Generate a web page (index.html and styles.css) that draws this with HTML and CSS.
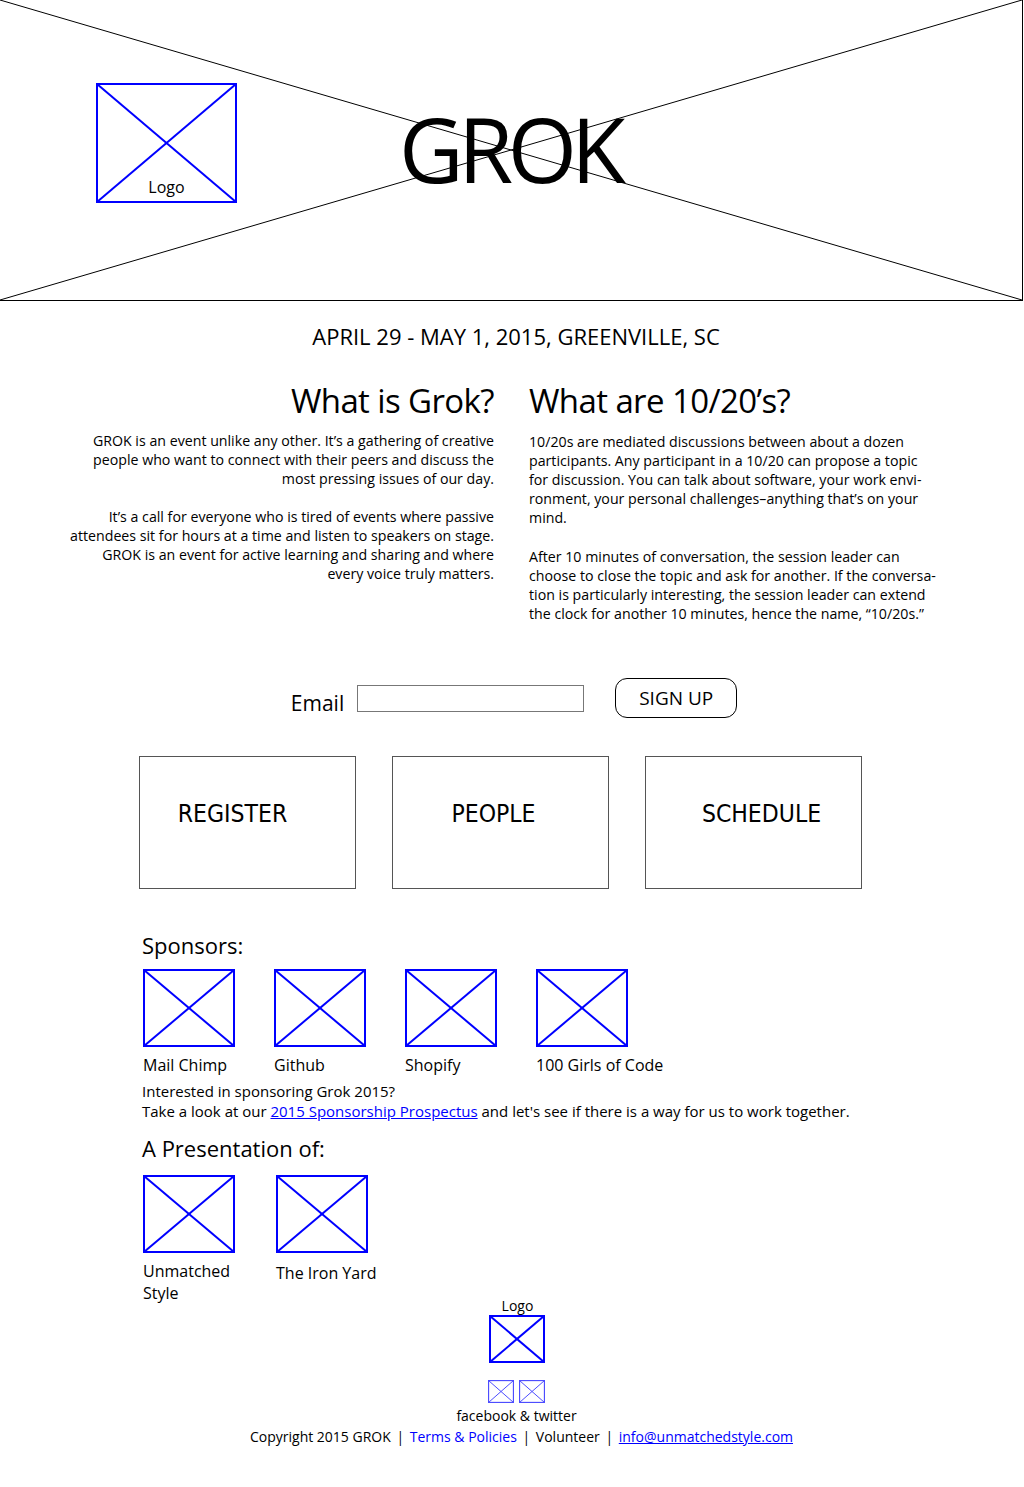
FILE: index.html
```html
<!DOCTYPE html>
<html lang="en">
<head>
<meta charset="utf-8">
<title>GROK</title>
<link rel="stylesheet" href="styles.css">
</head>
<body>
<header class="hero">
  <svg class="hero-x" width="1023" height="301" viewBox="0 0 1023 301">
    <line x1="0" y1="0" x2="1022" y2="300" stroke="#000" stroke-width="1"/>
    <line x1="0" y1="300" x2="1022" y2="0" stroke="#000" stroke-width="1"/>
  </svg>
  <div class="hero-logo">
    <svg width="141" height="120" viewBox="0 0 141 120">
      <rect x="1" y="1" width="139" height="118" fill="none" stroke="#0000ff" stroke-width="2"/>
      <line x1="1" y1="1" x2="140" y2="119" stroke="#0000ff" stroke-width="2"/>
      <line x1="1" y1="119" x2="140" y2="1" stroke="#0000ff" stroke-width="2"/>
    </svg>
    <span class="hero-logo-label">Logo</span>
  </div>
  <h1 class="hero-title">GROK</h1>
</header>

<p class="date">APRIL 29 - MAY 1, 2015, GREENVILLE, SC</p>

<section class="about">
  <div class="about-col about-left">
    <h2 class="about-title">What is Grok?</h2>
    <p class="about-text">GROK is an event unlike any other. It’s a gathering of creative<br>people who want to connect with their peers and discuss the<br>most pressing issues of our day.</p>
    <p class="about-text">It’s a call for everyone who is tired of events where passive<br>attendees sit for hours at a time and listen to speakers on stage.<br>GROK is an event for active learning and sharing and where<br>every voice truly matters.</p>
  </div>
  <div class="about-col about-right">
    <h2 class="about-title">What are 10/20’s?</h2>
    <p class="about-text">10/20s are mediated discussions between about a dozen<br>participants. Any participant in a 10/20 can propose a topic<br>for discussion. You can talk about software, your work envi-<br>ronment, your personal challenges–anything that’s on your<br>mind.</p>
    <p class="about-text">After 10 minutes of conversation, the session leader can<br>choose to close the topic and ask for another. If the conversa-<br>tion is particularly interesting, the session leader can extend<br>the clock for another 10 minutes, hence the name, “10/20s.”</p>
  </div>
</section>

<form class="signup">
  <label class="signup-label" for="email">Email</label>
  <input class="signup-input" id="email" type="text">
  <button class="signup-btn" type="button">SIGN UP</button>
</form>

<main class="content">
  <nav class="tiles">
    <a class="tile tile-register">REGISTER</a>
    <a class="tile tile-people">PEOPLE</a>
    <a class="tile tile-schedule">SCHEDULE</a>
  </nav>

  <section class="sponsors">
    <h3 class="section-title">Sponsors:</h3>
    <div class="sponsor-row">
      <div class="sponsor">
        <svg class="ph" width="92" height="78" viewBox="0 0 92 78"><rect x="1" y="1" width="90" height="76" fill="none" stroke="#0000ff" stroke-width="2"/><line x1="1" y1="1" x2="91" y2="77" stroke="#0000ff" stroke-width="2"/><line x1="1" y1="77" x2="91" y2="1" stroke="#0000ff" stroke-width="2"/></svg>
        <span class="sponsor-name">Mail Chimp</span>
      </div>
      <div class="sponsor">
        <svg class="ph" width="92" height="78" viewBox="0 0 92 78"><rect x="1" y="1" width="90" height="76" fill="none" stroke="#0000ff" stroke-width="2"/><line x1="1" y1="1" x2="91" y2="77" stroke="#0000ff" stroke-width="2"/><line x1="1" y1="77" x2="91" y2="1" stroke="#0000ff" stroke-width="2"/></svg>
        <span class="sponsor-name">Github</span>
      </div>
      <div class="sponsor">
        <svg class="ph" width="92" height="78" viewBox="0 0 92 78"><rect x="1" y="1" width="90" height="76" fill="none" stroke="#0000ff" stroke-width="2"/><line x1="1" y1="1" x2="91" y2="77" stroke="#0000ff" stroke-width="2"/><line x1="1" y1="77" x2="91" y2="1" stroke="#0000ff" stroke-width="2"/></svg>
        <span class="sponsor-name">Shopify</span>
      </div>
      <div class="sponsor">
        <svg class="ph" width="92" height="78" viewBox="0 0 92 78"><rect x="1" y="1" width="90" height="76" fill="none" stroke="#0000ff" stroke-width="2"/><line x1="1" y1="1" x2="91" y2="77" stroke="#0000ff" stroke-width="2"/><line x1="1" y1="77" x2="91" y2="1" stroke="#0000ff" stroke-width="2"/></svg>
        <span class="sponsor-name">100 Girls of Code</span>
      </div>
    </div>
    <p class="sponsor-note">Interested in sponsoring Grok 2015?<br>Take a look at our <a class="link-underline" href="#">2015 Sponsorship Prospectus</a> and let's see if there is a way for us to work together.</p>
  </section>

  <section class="presenters">
    <h3 class="section-title">A Presentation of:</h3>
    <div class="sponsor-row presenter-row">
      <div class="presenter">
        <svg class="ph" width="92" height="78" viewBox="0 0 92 78"><rect x="1" y="1" width="90" height="76" fill="none" stroke="#0000ff" stroke-width="2"/><line x1="1" y1="1" x2="91" y2="77" stroke="#0000ff" stroke-width="2"/><line x1="1" y1="77" x2="91" y2="1" stroke="#0000ff" stroke-width="2"/></svg>
        <span class="presenter-name">Unmatched<br>Style</span>
      </div>
      <div class="presenter">
        <svg class="ph" width="92" height="78" viewBox="0 0 92 78"><rect x="1" y="1" width="90" height="76" fill="none" stroke="#0000ff" stroke-width="2"/><line x1="1" y1="1" x2="91" y2="77" stroke="#0000ff" stroke-width="2"/><line x1="1" y1="77" x2="91" y2="1" stroke="#0000ff" stroke-width="2"/></svg>
        <span class="presenter-name presenter-name-low">The Iron Yard</span>
      </div>
    </div>
  </section>
</main>

<footer class="footer">
  <span class="footer-logo-label">Logo</span>
  <svg class="footer-logo" width="56" height="48" viewBox="0 0 56 48"><rect x="1" y="1" width="54" height="46" fill="none" stroke="#0000ff" stroke-width="2"/><line x1="1" y1="1" x2="55" y2="47" stroke="#0000ff" stroke-width="2"/><line x1="1" y1="47" x2="55" y2="1" stroke="#0000ff" stroke-width="2"/></svg>
  <div class="social">
    <svg width="26" height="23" viewBox="0 0 26 23"><rect x="0.5" y="0.5" width="25" height="22" fill="none" stroke="#4d4dff" stroke-width="1.3"/><line x1="0.5" y1="0.5" x2="25.5" y2="22.5" stroke="#4d4dff" stroke-width="1"/><line x1="0.5" y1="22.5" x2="25.5" y2="0.5" stroke="#4d4dff" stroke-width="1"/></svg>
    <svg width="26" height="23" viewBox="0 0 26 23"><rect x="0.5" y="0.5" width="25" height="22" fill="none" stroke="#4d4dff" stroke-width="1.3"/><line x1="0.5" y1="0.5" x2="25.5" y2="22.5" stroke="#4d4dff" stroke-width="1"/><line x1="0.5" y1="22.5" x2="25.5" y2="0.5" stroke="#4d4dff" stroke-width="1"/></svg>
  </div>
  <span class="social-label">facebook &amp; twitter</span>
  <p class="footer-links">Copyright 2015 GROK <span class="sep">|</span> <a class="link-plain" href="#">Terms &amp; Policies</a> <span class="sep">|</span> Volunteer <span class="sep">|</span> <a class="link-underline" href="#">info@unmatchedstyle.com</a></p>
</footer>
</body>
</html>
```
FILE: styles.css
```css
* { box-sizing: border-box; }

body {
  margin: 0;
  background: #fff;
  color: #000;
  font-family: "Open Sans", "Noto Sans", sans-serif;
}

/* Hero */
.hero {
  position: relative;
  width: 1023px;
  height: 301px;
  border-right: 1px solid #000;
  border-bottom: 1px solid #000;
  display: flex;
  align-items: flex-start;
}
.hero-x {
  position: absolute;
  left: 0;
  top: 0;
}
.hero-logo {
  position: relative;
  margin-left: 96px;
  margin-top: 83px;
  width: 141px;
  height: 120px;
}
.hero-logo svg { display: block; }
.hero-logo-label {
  position: absolute;
  left: 0;
  right: 0;
  bottom: 5px;
  text-align: center;
  font-size: 16px;
}
.hero-title {
  position: relative;
  margin: 94px 0 0 162px;
  font-weight: 400;
  font-size: 89px;
  line-height: 110px;
  letter-spacing: -5.5px;
}

/* Date */
.date {
  margin: 20px 0 0;
  padding-left: 8px;
  text-align: center;
  font-size: 22px;
  line-height: 30px;
}

/* About */
.about {
  display: flex;
  gap: 35px;
  margin-top: 30px;
  padding-left: 54px;
}
.about-col { white-space: nowrap; }
.about-left { width: 440px; text-align: right; }
.about-right { width: 420px; }
.about-title {
  margin: 0 0 10px;
  font-weight: 400;
  font-size: 33px;
  line-height: 40px;
  letter-spacing: -0.6px;
}
.about-right .about-title { margin-bottom: 11px; }
.about-text {
  margin: 0 0 19px;
  font-size: 14.2px;
  line-height: 19px;
  letter-spacing: 0;
}
.about-right .about-text { margin-bottom: 20px; }

/* Signup */
.signup {
  display: flex;
  align-items: center;
  justify-content: center;
  margin-top: 35px;
  padding-left: 4px;
}
.signup-label {
  font-size: 21px;
  margin-right: 13px;
  margin-top: 10px;
}
.signup-input {
  width: 227px;
  height: 27px;
  border: 1px solid #777;
  margin: 0 31px 0 0;
}
.signup-btn {
  width: 122px;
  height: 40px;
  border: 1px solid #000;
  border-radius: 12px;
  background: #fff;
  font-family: inherit;
  font-size: 19px;
  color: #000;
}

/* Content */
.content {
  width: 723px;
  margin: 38px 0 0 139px;
}
.tiles {
  display: flex;
  justify-content: space-between;
}
.tile {
  display: block;
  width: 217px;
  height: 133px;
  border: 1px solid #555;
  text-align: center;
  padding-top: 39px;
  font-family: "Liberation Sans Narrow", "DejaVu Sans Condensed", sans-serif;
  font-size: 24.5px;
  line-height: 36px;
}
.tile-register { padding-right: 30px; }
.tile-people { padding-right: 14px; }
.tile-schedule { padding-left: 16px; }

.section-title {
  margin: 0;
  font-weight: 400;
  font-size: 22px;
  line-height: 30px;
  padding-left: 3px;
}
.sponsors { margin-top: 41px; }
.sponsor-row {
  display: flex;
  margin-top: 9px;
  padding-left: 4px;
}
.presenter-row { margin-top: 12px; }
.sponsor, .presenter {
  width: 131px;
  display: flex;
  flex-direction: column;
}
.presenter { width: 133px; }
.ph { display: block; }
.sponsor-name, .presenter-name {
  font-size: 16px;
  line-height: 22px;
  margin-top: 7px;
}
.presenter-name-low { margin-top: 9px; }
.sponsor-note {
  margin: 5px 0 0 3px;
  font-size: 15px;
  line-height: 20px;
  white-space: nowrap;
  letter-spacing: 0;
}
.link-underline { color: #0000ff; text-decoration: underline; }
.link-plain { color: #0000ff; text-decoration: none; }

.presenters { margin-top: 12px; }

/* Footer */
.footer {
  display: flex;
  flex-direction: column;
  align-items: center;
  margin-top: -7px;
  padding-left: 7px;
  padding-bottom: 40px;
}
.footer-logo-label {
  font-size: 14px;
  line-height: 18px;
  margin-left: 4px;
}
.footer-logo { display: block; margin-left: 2px; }
.social {
  display: flex;
  gap: 5px;
  margin-top: 17px;
  margin-left: 2px;
}
.social svg { display: block; }
.social-label {
  font-size: 14px;
  line-height: 20px;
  margin-top: 3px;
  margin-left: 2px;
}
.footer-links {
  margin: 1px 0 0 12px;
  font-size: 14px;
  line-height: 20px;
  letter-spacing: 0;
  word-spacing: 0;
  white-space: nowrap;
}
.sep { margin: 0 2px; }
```
